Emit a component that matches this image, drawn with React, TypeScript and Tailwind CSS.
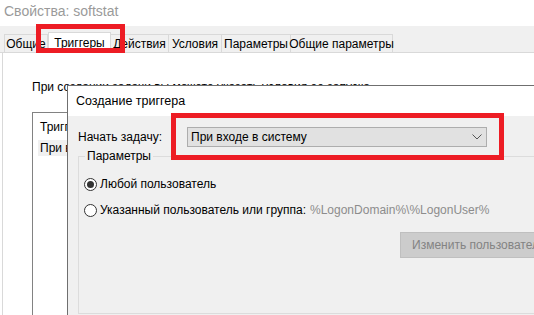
const tabs = [
  { label: 'Общие', w: 'w-[44px]' },
  { label: 'Триггеры', w: 'w-[63px]', active: true },
  { label: 'Действия', w: 'w-[59px]' },
  { label: 'Условия', w: 'w-[54px]' },
  { label: 'Параметры', w: 'w-[70px]' },
  { label: 'Общие параметры', w: 'w-[103px]' },
]

function Radio({ checked }: { checked?: boolean }) {
  return (
    <span className="w-[13px] h-[13px] rounded-full border border-[#333] bg-white flex items-center justify-center shrink-0">
      {checked && <span className="w-[7px] h-[7px] rounded-full bg-[#333]" />}
    </span>
  )
}

export default function App() {
  return (
    <div className="relative w-[534px] h-[315px] overflow-hidden bg-white text-[12px] text-black whitespace-nowrap font-['Liberation_Sans',sans-serif]">
      {/* window title */}
      <div className="h-[26px] pl-[4px] pt-[2px] text-[14px] leading-[18px] text-[#9a9a9a]">Свойства: softstat</div>

      {/* tab strip */}
      <div className="h-[27px] bg-[#f0f0f0] flex items-end pl-[4px] border-b border-[#d9d9d9]">
        {tabs.map((t) =>
          t.active ? (
            <div key={t.label} className={`${t.w} h-[21px] -mb-px bg-white border border-b-0 border-[#d9d9d9] flex items-center justify-center`}>
              {t.label}
            </div>
          ) : (
            <div key={t.label} className={`${t.w} h-[18px] bg-[#f0f0f0] border border-b-0 border-[#d9d9d9] -ml-px first:ml-0 flex items-center justify-center leading-none`}>
              {t.label}
            </div>
          )
        )}
      </div>

      {/* page body */}
      <div className="ml-[2px] h-[262px] border-l border-[#d9d9d9] bg-white pl-[29px] pt-[26px]">
        <p className="leading-[16px]">При создании задачи вы можете указать условия ее запуска.</p>
        <div className="mt-[17px] w-[120px] h-[220px] border border-[#828282] pl-[7px] pt-[6px]">
          <div className="leading-[16px]">Триггер</div>
          <div className="mt-[5px] -ml-[2px] pl-[2px] h-[16px] bg-[#f0f0f0] leading-[16px]">При входе</div>
        </div>
      </div>

      {/* trigger dialog */}
      <div className="absolute left-[67px] top-[85px] w-[500px] h-[250px] border border-[#6f6f6f] bg-[#f0f0f0]">
        <div className="h-[30px] bg-white pl-[8px] flex items-center text-[12.5px]">Создание триггера</div>
        <div className="pl-[10px]">
          <div className="flex items-center h-[20px] mt-[11px]">
            <span className="w-[109px]">Начать задачу:</span>
            <div className="w-[300px] h-[20px] border border-[#adadad] bg-[#e1e1e1] flex items-center justify-between pl-[3px] pr-[4px]">
              <span>При входе в систему</span>
              <svg width="10" height="6" viewBox="0 0 10 6" fill="none" stroke="#555" strokeWidth="1">
                <path d="M0.5 0.5 L5 5 L9.5 0.5" />
              </svg>
            </div>
          </div>

          <div className="relative mt-[9px] w-[470px] h-[158px] border border-[#dcdcdc]">
            <span className="absolute -top-[9px] left-[6px] px-[2px] bg-[#f0f0f0] leading-[16px]">Параметры</span>
            <div className="pl-[5px] pt-[18px] flex flex-col">
              <div className="flex items-center gap-[3px] h-[18px]">
                <Radio checked />
                <span>Любой пользователь</span>
              </div>
              <div className="flex items-center gap-[3px] h-[18px] mt-[8px]">
                <Radio />
                <span className="w-[207px]">Указанный пользователь или группа:</span>
                <span className="text-[#8c8c8c]">%LogonDomain%\%LogonUser%</span>
              </div>
              <div className="flex mt-[13px] pl-[316px]">
                <div className="w-[150px] h-[26px] border border-[#bfbfbf] bg-[#cccccc] text-[#838383] flex items-center pl-[11px]">
                  Изменить пользователя
                </div>
              </div>
            </div>
          </div>
        </div>
      </div>

      {/* red annotation frames */}
      <div className="absolute left-[36px] top-[24px] w-[89px] h-[29px] border-[5px] border-[#ed1c24]" />
      <div className="absolute left-[171px] top-[113px] w-[333px] h-[47px] border-[5px] border-[#ed1c24]" />
    </div>
  )
}
